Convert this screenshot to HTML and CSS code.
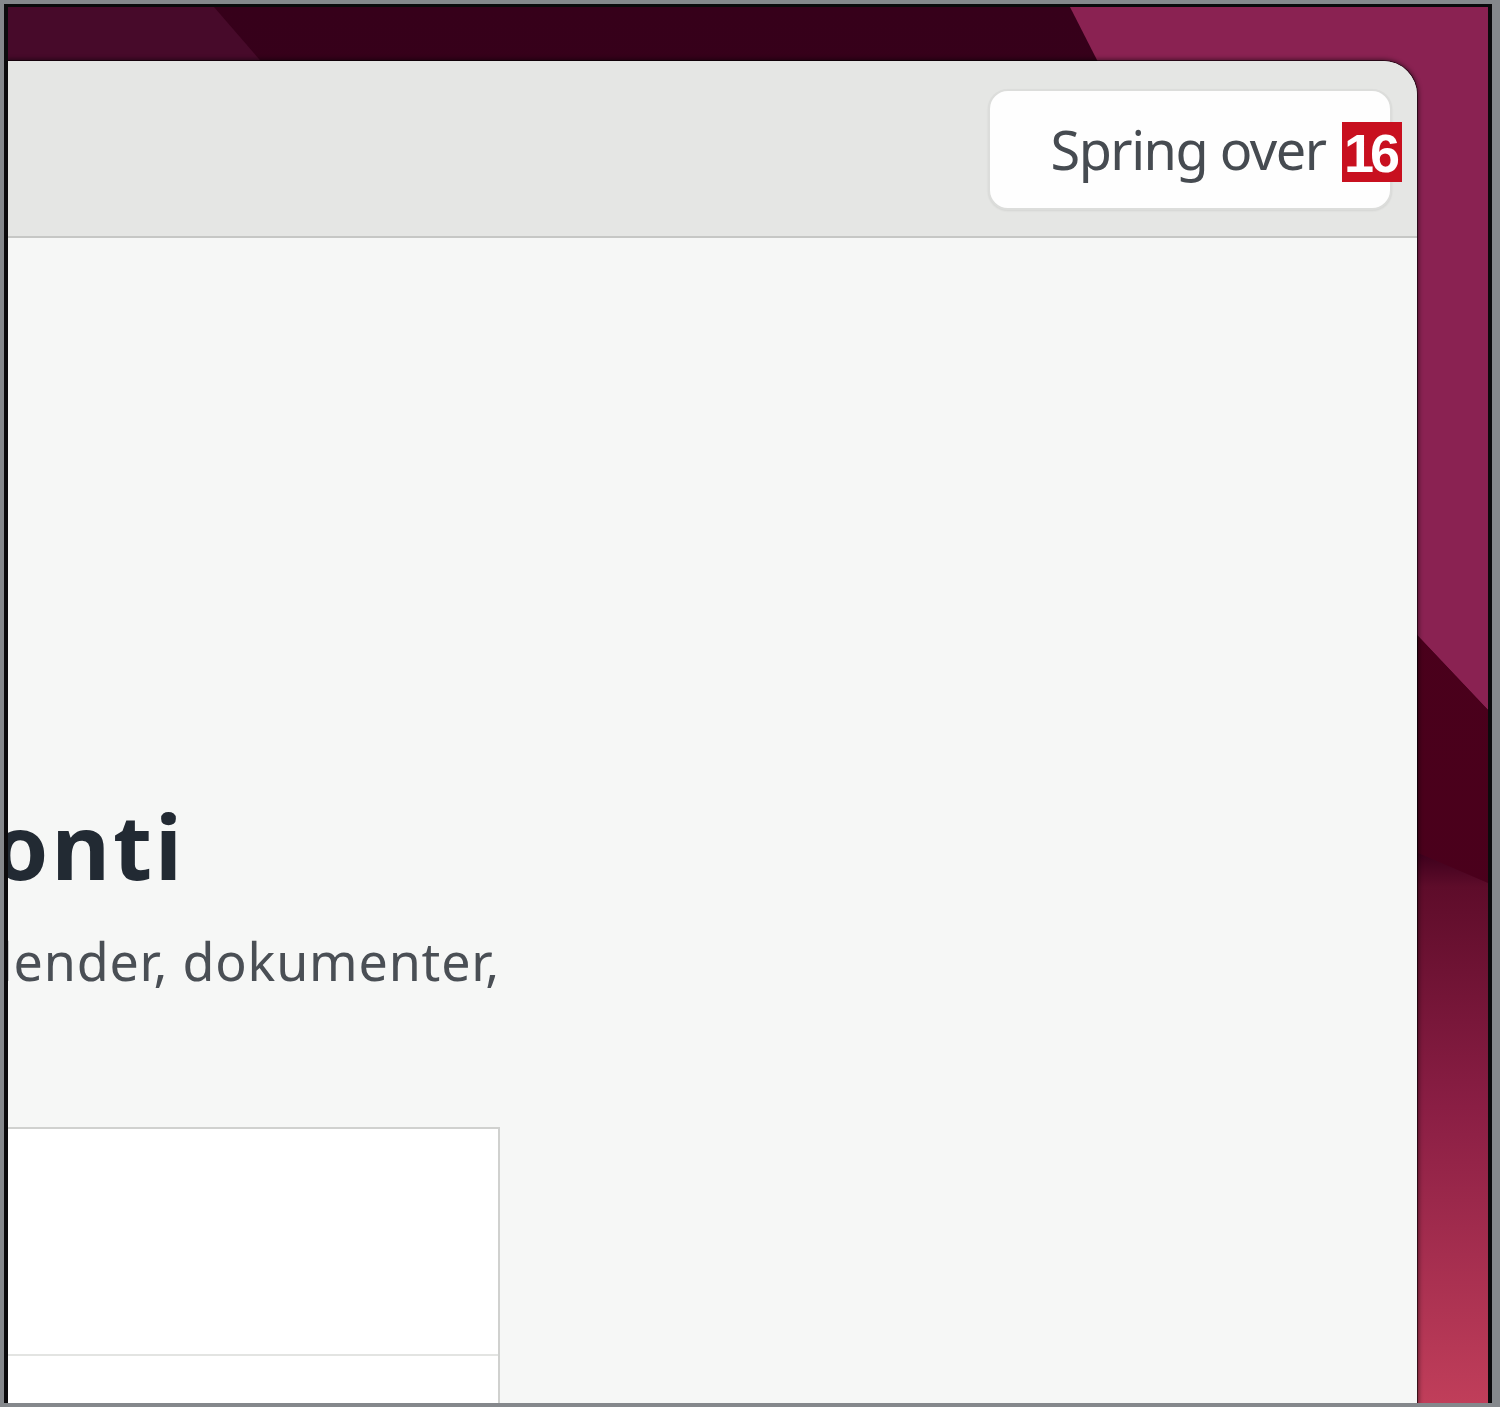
FILE: index.html
```html
<!DOCTYPE html>
<html lang="da">
<head>
<meta charset="utf-8">
<title>Velkommen</title>
<link rel="stylesheet" href="styles.css">
</head>
<body>
<div class="screen">
  <div class="wallpaper" aria-hidden="true">
    <div class="wp wp-left"></div>
    <div class="wp wp-pink"></div>
    <div class="wp wp-dark"></div>
  </div>
  <div class="dialog">
    <header class="headerbar">
      <button class="skip">
        <span class="skip-label">Spring over</span>
        <span class="badge">16</span>
      </button>
    </header>
    <main class="content">
      <div class="line heading-line">
        <h1 class="title">Tilslut dine onlinekonti</h1>
      </div>
      <div class="line sub-line">
        <p class="subtitle">Tilslut dine konti for nemt at få adgang til e-mail, kalender, dokumenter,</p>
      </div>
      <div class="listbox">
        <div class="row row-first"></div>
        <div class="row row-rest"></div>
      </div>
    </main>
  </div>
</div>
</body>
</html>
```

FILE: styles.css
```css
html, body {
  margin: 0;
  padding: 0;
  height: 1407px;
  overflow: hidden;
  background: #85888c;
  font-family: "Noto Sans", "Open Sans", sans-serif;
}

.screen {
  position: relative;
  box-sizing: border-box;
  margin: 4px 8px 0 4px;
  height: 1399px;
  border-top: 3px solid #0b0a0c;
  border-left: 4px solid #0b0a0c;
  border-right: 4px solid #0b0a0c;
  overflow: hidden;
  display: flex;
  flex-direction: column;
  padding-top: 54px;
}

.wallpaper {
  position: absolute;
  inset: 0;
  background: linear-gradient(180deg, #36001a 0, #3d001c 846px, #5e0c2a 880px, #8a1e44 1100px, #c03e5a 100%);
}

.wp {
  position: absolute;
  inset: 0;
}

.wp-left {
  background: #470a2a;
  clip-path: polygon(0 0, 206px 0, 258px 60px, 0 60px);
}

.wp-pink {
  background: linear-gradient(90deg, #741747 0, #7d1b4b 200px, #8a2252 420px);
  clip-path: polygon(1062px 0, 1480px 0, 1480px 703px, 1410px 629px, 1089px 53px);
}

.wp-dark {
  background: linear-gradient(180deg, #3a0016 0, #48001b 200px, #4c001c 100%);
  clip-path: polygon(1410px 629px, 1480px 703px, 1480px 876px, 1410px 846px);
}

.dialog {
  position: relative;
  width: 1409px;
  flex: 1;
  display: flex;
  flex-direction: column;
  background: #f6f7f6;
  border-top-right-radius: 34px;
  box-shadow: 0 0 0 1px rgba(0, 0, 0, 0.55), 0 0 4px 2px rgba(0, 0, 0, 0.45);
  overflow: hidden;
}

.headerbar {
  height: 175px;
  flex: none;
  background: #e5e6e4;
  border-bottom: 2px solid #c6c7c5;
  display: flex;
  justify-content: flex-end;
  align-items: center;
  padding-right: 25px;
}

.skip {
  position: relative;
  box-sizing: border-box;
  width: 404px;
  height: 121px;
  margin-top: 2px;
  background: #fefefe;
  border: 2px solid #dcdddb;
  border-radius: 20px;
  box-shadow: 0 1px 2px rgba(0, 0, 0, 0.08);
  display: flex;
  align-items: center;
  justify-content: center;
  padding: 0;
  font-family: "Noto Sans", "Open Sans", sans-serif;
}

.skip-label {
  font-size: 54px;
  letter-spacing: -1.5px;
  color: #464b51;
  margin-left: -4px;
  margin-top: -2px;
}

.badge {
  position: absolute;
  right: -12px;
  top: 31px;
  width: 60px;
  height: 60px;
  background: #c8101f;
  color: #ffffff;
  font-family: "Liberation Sans", Arial, sans-serif;
  font-weight: 700;
  font-size: 54px;
  letter-spacing: -4px;
  line-height: 62px;
  text-align: center;
  text-indent: -4px;
}

.content {
  flex: 1;
  display: flex;
  flex-direction: column;
}

.line {
  display: flex;
  justify-content: flex-end;
  overflow: hidden;
  white-space: nowrap;
}

.heading-line {
  width: 177px;
  margin-top: 555px;
}

.title {
  margin: 0;
  font-size: 90px;
  line-height: 104px;
  letter-spacing: 3px;
  font-weight: 700;
  color: #222a33;
}

.sub-line {
  width: 492px;
  margin-top: 34px;
}

.subtitle {
  margin: 0;
  font-size: 52px;
  line-height: 60px;
  letter-spacing: 0.8px;
  color: #4a4f55;
}

.listbox {
  margin-top: 136px;
  width: 490px;
  flex: 1;
  background: #ffffff;
  border-top: 2px solid #d0d1cf;
  border-right: 2px solid #d0d1cf;
  display: flex;
  flex-direction: column;
}

.row-first {
  flex: none;
  height: 225px;
  border-bottom: 2px solid #e3e4e2;
}

.row-rest {
  flex: 1;
}
```
